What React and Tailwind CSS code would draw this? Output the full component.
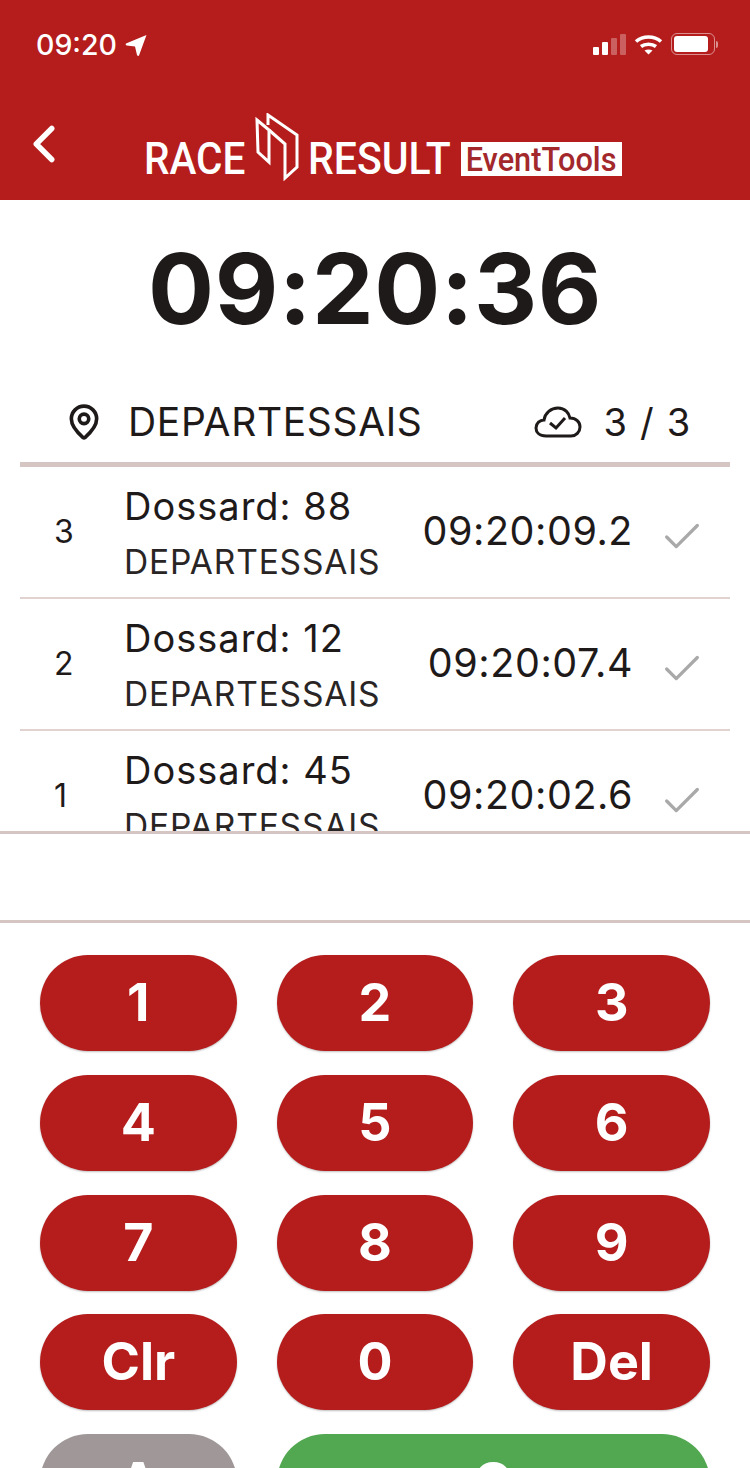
import { Check, ChevronLeft, MapPin } from 'lucide-react';

const rows = [
  { n: '3', bib: '88', time: '09:20:09.2' },
  { n: '2', bib: '12', time: '09:20:07.4' },
  { n: '1', bib: '45', time: '09:20:02.6' },
];

const keys = ['1', '2', '3', '4', '5', '6', '7', '8', '9', 'Clr', '0', 'Del'];

const StatusBar = () => (
  <div className="flex h-[90px] items-start justify-between pl-[36px] pr-[32px] pt-[28px] text-white">
    <div className="flex items-center gap-[8px]">
      <span className="text-[28.5px] leading-[34px] font-medium">09:20</span>
      <svg width="22" height="22" viewBox="0 0 22 22" fill="white">
        <path d="M21.5 1 L14 21.5 Q13 22.5 12 21 L10 12.5 L1.5 11.5 Q0 10.5 1 9.5 Z" />
      </svg>
    </div>
    <div className="flex items-center gap-[8px] pt-[5px]">
      <div className="flex items-end gap-[3px]">
        <div className="h-[8px] w-[6px] rounded-[1px] bg-white" />
        <div className="h-[13px] w-[6px] rounded-[1px] bg-white" />
        <div className="h-[17px] w-[6px] rounded-[1px] bg-white/30" />
        <div className="h-[21px] w-[6px] rounded-[1px] bg-white/30" />
      </div>
      <svg width="29" height="21" viewBox="0 0 29 21" fill="none" stroke="white" strokeWidth="3.6">
        <path d="M2 7.5 C9 1.5 20 1.5 27 7.5" />
        <path d="M7 12.5 C11 9.5 18 9.5 22 12.5" />
        <path d="M14.5 20.5 L10.5 16.5 C13 15 16 15 18.5 16.5 Z" fill="white" stroke="none" />
      </svg>
      <div className="flex items-center">
        <div className="flex h-[22px] w-[44px] items-center rounded-[6px] border border-white/50 p-[2px]">
          <div className="h-full w-[34px] rounded-[3px] bg-white" />
        </div>
        <div className="ml-[1px] h-[7px] w-[2px] rounded-r-full bg-white/50" />
      </div>
    </div>
  </div>
);

const Logo = () => (
  <div className="flex items-end text-white">
    <span className="inline-block w-[104px] origin-left scale-x-[0.9] font-['Roboto',sans-serif] text-[45px] leading-[40px] font-medium whitespace-nowrap">
      RACE
    </span>
    <svg className="mx-[7px] mb-[-2px]" width="46" height="68" viewBox="0 0 46 68" fill="none" stroke="white" strokeWidth="3">
      <path d="M2 7 L14 17 V49 L3 39 Z" />
      <path d="M13 12 V2 L42 22 V54 L30 65 V31 L14 17" />
    </svg>
    <span className="inline-block w-[146px] origin-left scale-x-[0.91] font-['Roboto',sans-serif] text-[45px] leading-[40px] font-medium whitespace-nowrap">
      RESULT
    </span>
    <div className="mb-[3px] ml-[7px] flex h-[34px] w-[161px] items-center justify-center bg-white">
      <span className="inline-block origin-center scale-x-[0.93] font-['Roboto',sans-serif] text-[33px] leading-[33px] font-medium whitespace-nowrap text-[#a3282c]">
        EventTools
      </span>
    </div>
  </div>
);

const Row = ({ row, last }) => (
  <div className={`flex h-[132px] shrink-0 ${last ? '' : 'border-b-2 border-[#e0d2cf]'}`}>
    <div className="w-[104px] pt-[43px] pl-[34px] text-[32px] leading-[44px]">{row.n}</div>
    <div className="flex-1 pt-[15px]">
      <div className="text-[38px] leading-[48px] tracking-[1px]">Dossard: {row.bib}</div>
      <div className="mt-[9px] text-[33.5px] leading-[46px] tracking-[0.85px] text-[#2a2525]">DEPARTESSAIS</div>
    </div>
    <div className="pt-[39px] text-[39.5px] leading-[50px] tracking-[0.55px]">{row.time}</div>
    <div className="w-[97px] pt-[47px] pl-[26px]">
      <Check size={46} strokeWidth={1.7} className="text-[#a9a9a9]" />
    </div>
  </div>
);

const App = () => (
  <div className="h-[1468px] w-[750px] overflow-hidden bg-white font-['Inter',sans-serif] text-[#1f1a1a]">
    {/* Header */}
    <div className="h-[200px] bg-[#b51c1c]">
      <StatusBar />
      <div className="flex items-start pt-[18px]">
        <ChevronLeft size={62} strokeWidth={2.1} className="mt-[5px] ml-[13px] text-white" />
        <div className="ml-[69px] pt-[5px]">
          <Logo />
        </div>
      </div>
    </div>

    {/* Clock */}
    <div className="flex h-[180px] items-center justify-center pb-[2px] text-[98px] leading-none font-bold tracking-[0.5px]">
      09:20:36
    </div>

    {/* Location */}
    <div className="mx-[20px] flex h-[87px] items-start border-b-[5px] border-[#d6c6c3]">
      <MapPin size={38} strokeWidth={2.3} className="mt-[23px] ml-[45px]" />
      <div className="ml-[25px] pt-[19px] text-[39px] leading-[46px] tracking-[0.65px]">DEPARTESSAIS</div>
      <svg className="mt-[26px] ml-[111px]" width="48" height="32" viewBox="0 0 48 32" fill="none" stroke="#1f1a1a" strokeWidth="3">
        <path d="M12 30 C5 30 2 26 2 22 C2 17 6 14 10 14 C11 7 17 2 24 2 C31 2 35 7 36 12 C42 12 46 16 46 21 C46 26 42 30 37 30 Z" />
        <path d="M16 17 L22 22 L31 12" />
      </svg>
      <div className="ml-[22px] pt-[19px] text-[38px] leading-[46px] tracking-[1.2px]">3 / 3</div>
    </div>

    {/* List */}
    <div className="mx-[20px] h-[364px] overflow-hidden">
      {rows.map((row, i) => (
        <Row key={row.n} row={row} last={i === rows.length - 1} />
      ))}
    </div>

    {/* Bib input */}
    <div className="h-[92px] border-y-[3px] border-[#d6c6c3]" />

    {/* Keypad */}
    <div className="grid grid-cols-3 gap-x-[40px] gap-y-[23.75px] px-[40px] pt-[32px]">
      {keys.map((key) => (
        <div
          key={key}
          className="flex h-[96px] items-center justify-center rounded-[48px] bg-[#b51c1c] text-[52px] font-bold text-white shadow-[0_1px_2px_rgba(0,0,0,0.25)]"
        >
          {key}
        </div>
      ))}
      <div className="flex h-[96px] items-center justify-center rounded-[48px] bg-[#a09898] text-[52px] font-bold text-white">
        A
      </div>
      <div className="col-span-2 flex h-[96px] items-center justify-center rounded-[48px] bg-[#52a850] text-[52px] font-bold text-white">
        O
      </div>
    </div>
  </div>
);

export default App;
